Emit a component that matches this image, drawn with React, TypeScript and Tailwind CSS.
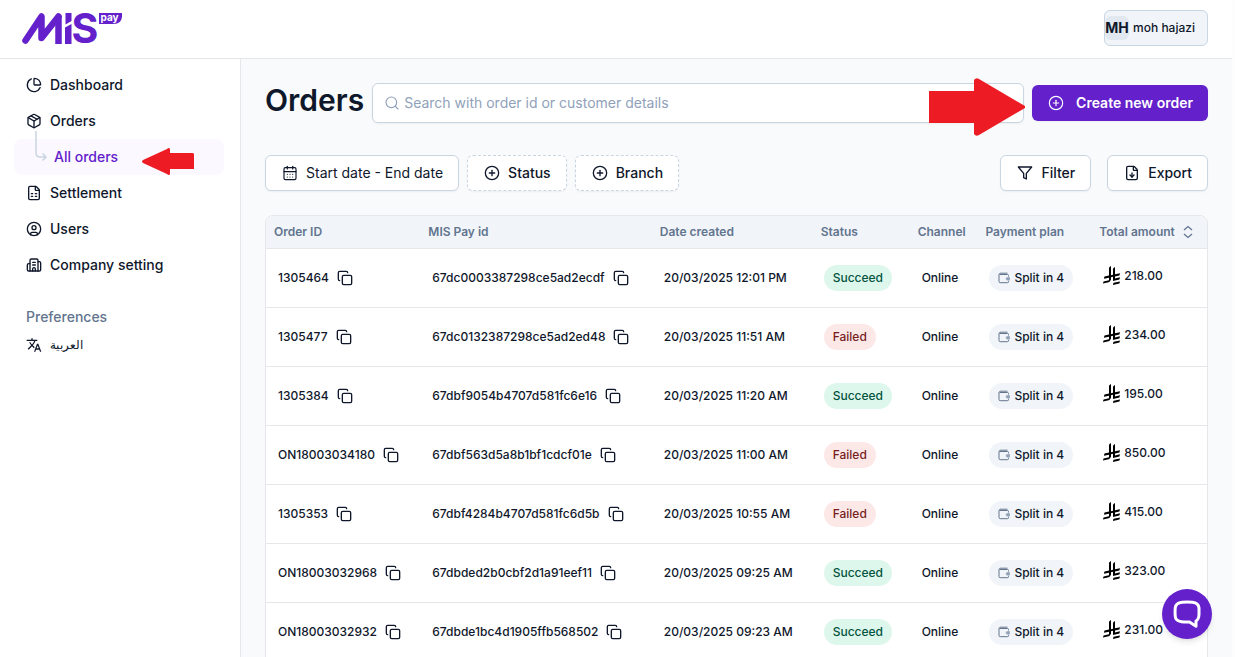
import type { ReactNode } from "react";
import {
  Building2,
  CalendarDays,
  ChartPie,
  CirclePlus,
  CircleUser,
  Copy,
  FileDown,
  FileSpreadsheet,
  Package,
  Search,
} from "lucide-react";
import { MdTranslate } from "react-icons/md";

type Order = {
  id: string;
  payId: string;
  date: string;
  status: "Succeed" | "Failed";
  amount: string;
};

const orders: Order[] = [
  { id: "1305464", payId: "67dc0003387298ce5ad2ecdf", date: "20/03/2025 12:01 PM", status: "Succeed", amount: "218.00" },
  { id: "1305477", payId: "67dc0132387298ce5ad2ed48", date: "20/03/2025 11:51 AM", status: "Failed", amount: "234.00" },
  { id: "1305384", payId: "67dbf9054b4707d581fc6e16", date: "20/03/2025 11:20 AM", status: "Succeed", amount: "195.00" },
  { id: "ON18003034180", payId: "67dbf563d5a8b1bf1cdcf01e", date: "20/03/2025 11:00 AM", status: "Failed", amount: "850.00" },
  { id: "1305353", payId: "67dbf4284b4707d581fc6d5b", date: "20/03/2025 10:55 AM", status: "Failed", amount: "415.00" },
  { id: "ON18003032968", payId: "67dbded2b0cbf2d1a91eef11", date: "20/03/2025 09:25 AM", status: "Succeed", amount: "323.00" },
  { id: "ON18003032932", payId: "67dbde1bc4d1905ffb568502", date: "20/03/2025 09:23 AM", status: "Succeed", amount: "231.00" },
];

function Logo() {
  return (
    <svg viewBox="0 0 101 33" className="h-[33px] w-[101px] overflow-visible" role="img" aria-label="MIS Pay">
      <g fill="none" stroke="#6320cb" strokeWidth="6.5" strokeLinejoin="round">
        <polyline points="3.5,28.5 19.5,4.5 19.5,26 36.500,4.5" strokeLinecap="round" />
        <line x1="36.5" y1="4" x2="36.5" y2="32" />
      </g>
      <polygon points="43,15.5 49.5,12 49.5,32 43,32" fill="#6320cb" />
      <polygon points="43.5,1 49.5,1 49.5,9 43.5,12.5" fill="#6320cb" />
      <text x="49.5" y="31" fontFamily="Inter, sans-serif" fontWeight="700" fontSize="41" fill="#6320cb">
        S
      </text>
      <path d="M77 1H100V5Q99 12 92 12H77Z" fill="#6320cb" />
      <text x="78.5" y="8.5" fontFamily="Inter, sans-serif" fontWeight="700" fontSize="10" fill="#fff">
        pay
      </text>
    </svg>
  );
}

function Riyal() {
  return (
    <svg viewBox="0 0 1125 1257" className="h-[19px] w-[17px] shrink-0" fill="#000" role="img" aria-label="SAR">
      <path d="M699.62 1113.02c-20.06 44.48-33.32 92.75-38.4 143.37l424.51-90.24c20.06-44.47 33.31-92.75 38.4-143.37l-424.51 90.24Z" />
      <path d="M1085.73 895.8c20.06-44.47 33.32-92.75 38.4-143.37l-330.68 70.33v-135.2l292.27-62.11c20.06-44.47 33.32-92.75 38.4-143.37l-330.68 70.27V66.13c-50.67 28.45-95.67 66.32-132.25 110.99v403.35l-132.25 28.11V0c-50.67 28.44-95.67 66.32-132.25 110.99v525.69l-295.91 62.88c-20.06 44.47-33.33 92.75-38.42 143.37l334.33-71.05v170.26l-358.3 76.14c-20.06 44.47-33.32 92.75-38.4 143.37l375.04-79.7c30.53-6.35 56.77-24.4 73.83-49.24l68.78-101.97c7.14-10.55 11.3-23.27 11.3-36.97v-149.98l132.25-28.11v270.4l424.53-90.28Z" />
    </svg>
  );
}

function WalletIcon() {
  return (
    <svg viewBox="0 0 12 12" className="size-3 shrink-0" fill="none" stroke="#64748b" strokeWidth="1" aria-hidden="true">
      <path d="M10.5 4.500V3.500a1 1 0 0 0-1-1H2A.7.7 0 0 1 2 1.200h7.500M1 2v7.500a1.200 1.200 0 0 0 1.200 1.200h7.300a1 1 0 0 0 1-1V8.800" />
      <path d="M11.500 5.500H9.500a1.300 1.300 0 0 0 0 2.600h2z" fill="#94a3b8" stroke="#94a3b8" strokeWidth="0.8" />
    </svg>
  );
}

function NavItem({ icon, label }: { icon: ReactNode; label: string }) {
  return (
    <a href="#" className="flex h-9 items-center gap-2 px-3">
      {icon}
      {label}
    </a>
  );
}

function Sidebar() {
  return (
    <nav className="w-[241px] shrink-0 border-r border-gray-200 bg-white pt-2 pr-4 pl-3.5 text-[14px] leading-5 font-medium text-slate-900">
      <NavItem icon={<ChartPie className="size-4" />} label="Dashboard" />
      <NavItem icon={<Package className="size-4" />} label="Orders" />
      <a href="#" className="relative flex h-9 items-center rounded-lg bg-[#fbf9ff] pl-10 text-[#6320cb]">
        <svg viewBox="0 0 14 32" className="absolute -top-2 left-5 h-8 w-3.5" fill="none" stroke="#cbd5e1" strokeWidth="1.5" aria-hidden="true">
          <path d="M2 0V22Q2 26 6 26H12M8.5 22.5L12 26L8.5 29.5" />
        </svg>
        All orders
      </a>
      <NavItem icon={<FileSpreadsheet className="size-4" />} label="Settlement" />
      <NavItem icon={<CircleUser className="size-4" />} label="Users" />
      <NavItem icon={<Building2 className="size-4" />} label="Company setting" />
      <p className="mt-6 px-3 text-slate-500">Preferences</p>
      <a href="#" lang="ar" className="mt-1 flex h-7 items-center gap-2 px-3 font-[Liberation_Serif,serif] text-[12px] font-normal">
        <MdTranslate className="size-4" />
        <span>العربية</span>
      </a>
    </nav>
  );
}

const solidButton = "flex h-9 items-center rounded-md border border-slate-300 bg-white pr-[15px] pl-4 shadow-xs";
const dashedButton = "flex h-9 items-center gap-2 rounded-md border border-dashed border-slate-300 bg-white pr-[15px] pl-4 font-medium shadow-xs";

function CopyValue({ value }: { value: string }) {
  return (
    <div className="flex items-center gap-2">
      {value}
      <button type="button" aria-label={`Copy ${value}`}>
        <Copy className="size-4" />
      </button>
    </div>
  );
}

function OrdersTable() {
  return (
    <div className="mt-6 rounded-t-lg border border-gray-200 bg-white">
      <table className="w-full table-fixed text-left text-[12px] leading-4 font-medium whitespace-nowrap">
        <colgroup>
          <col className="w-[16.4%]" />
          <col className="w-[24.6%]" />
          <col className="w-[17.1%]" />
          <col className="w-[10.3%]" />
          <col className="w-[7.2%]" />
          <col className="w-[12.1%]" />
          <col className="w-[12.3%]" />
        </colgroup>
        <thead className="bg-slate-100 text-slate-500">
          <tr className="h-8 border-b border-gray-200">
            <th className="rounded-tl-lg px-2 font-semibold">Order ID</th>
            <th className="px-2 font-semibold">MIS Pay id</th>
            <th className="px-2 font-semibold">Date created</th>
            <th className="px-2 font-semibold">Status</th>
            <th className="px-2 font-semibold">Channel</th>
            <th className="px-2 font-semibold">Payment plan</th>
            <th className="rounded-tr-lg px-2 font-semibold">
              <button type="button" className="flex items-center gap-2">
                Total amount
                <svg viewBox="0 0 10 14" className="h-3.5 w-2.5 shrink-0" fill="none" stroke="currentColor" strokeWidth="1.3" aria-hidden="true">
                  <path d="M1 5L5 1.500L9 5M1 9L5 12.500L9 9" />
                </svg>
              </button>
            </th>
          </tr>
        </thead>
        <tbody>
          {orders.map((order) => (
            <tr key={order.payId} className="h-[59px] border-b border-gray-200">
              <td className="px-3">
                <CopyValue value={order.id} />
              </td>
              <td className="px-3">
                <CopyValue value={order.payId} />
              </td>
              <td className="px-3">{order.date}</td>
              <td className="px-[11px]">
                <span
                  className={
                    order.status === "Succeed"
                      ? "inline-flex h-[26px] items-center rounded-full bg-[#def7ec] px-[9px] text-[#03543f]"
                      : "inline-flex h-[26px] items-center rounded-full bg-[#fde8e8] px-[9px] text-[#771d1d]"
                  }
                >
                  {order.status}
                </span>
              </td>
              <td className="px-3">Online</td>
              <td className="px-3">
                <span className="inline-flex h-[26px] items-center gap-1 rounded-full bg-slate-100 px-[9px]">
                  <WalletIcon />
                  Split in 4
                </span>
              </td>
              <td className="px-3 pb-1">
                <div className="flex items-center gap-1">
                  <Riyal />
                  {order.amount}
                </div>
              </td>
            </tr>
          ))}
        </tbody>
      </table>
    </div>
  );
}

export default function App() {
  return (
    <div className="relative flex h-screen flex-col overflow-hidden bg-[#fdfdfe] pr-[3px] font-[Inter,sans-serif] text-[14px] leading-5 text-slate-900">
      <header className="flex h-[59px] shrink-0 items-center justify-between border-b border-gray-200 bg-white pr-6 pb-0.5 pl-[22px]">
        <a href="#">
          <Logo />
        </a>
        <button type="button" className="flex h-9 items-center gap-1 rounded-md border border-slate-300 bg-slate-100 pr-3 text-[12px] font-medium">
          <span className="flex size-6 items-center justify-center rounded-md bg-slate-200 text-[14px] font-bold">MH</span>
          moh hajazi
        </button>
      </header>
      <div className="flex min-h-0 flex-1">
        <Sidebar />
        <main className="min-w-0 flex-1 overflow-hidden bg-slate-50 px-6 pt-6">
          <div className="relative flex items-center gap-2">
            <h1 className="pb-1.5 text-[30px] leading-8 font-semibold">Orders</h1>
            <label className="flex h-10 min-w-0 flex-1 items-center gap-1 rounded-md border border-slate-300 bg-white px-[11px] shadow-xs">
              <Search className="size-4 text-slate-400" strokeWidth={1.75} />
              <input
                type="search"
                aria-label="Search orders"
                placeholder="Search with order id or customer details"
                className="min-w-0 flex-1 bg-transparent outline-none placeholder:text-slate-400"
              />
            </label>
            <svg viewBox="0 0 96 58" className="absolute -top-[5px] right-[183px] h-[58px] w-24" fill="#ed1c24" aria-hidden="true">
              <path d="M0 13H45V2Q47-1 50 1L96 28Q97 29 96 30L50 57Q47 59 45 56V45H0Z" />
            </svg>
            <button type="button" className="flex h-9 items-center gap-3 rounded-md bg-[#6320cb] pr-[15px] pl-4 font-semibold text-white shadow-xs">
              <CirclePlus className="size-4" strokeWidth={1.75} />
              Create new order
            </button>
          </div>
          <div className="mt-8 flex items-center gap-2">
            <button type="button" className={`${solidButton} gap-2`}>
              <CalendarDays className="size-4" strokeWidth={1.75} />
              Start date - End date
            </button>
            <button type="button" className={dashedButton}>
              <CirclePlus className="size-4" />
              Status
            </button>
            <button type="button" className={dashedButton}>
              <CirclePlus className="size-4" />
              Branch
            </button>
            <div className="ml-auto flex gap-4">
              <button type="button" className={`${solidButton} gap-2 font-medium`}>
                <svg viewBox="0 0 24 24" className="size-4" fill="none" stroke="currentColor" strokeWidth="2" strokeLinejoin="round" aria-hidden="true">
                  <polygon points="22 3 2 3 10 12.46 10 19 14 21 14 12.46" />
                </svg>
                Filter
              </button>
              <button type="button" className={`${solidButton} gap-2 font-medium`}>
                <FileDown className="size-4" />
                Export
              </button>
            </div>
          </div>
          <OrdersTable />
        </main>
      </div>
      <svg viewBox="0 0 52 27" className="absolute top-[148px] left-[142px] h-[27px] w-[52px]" fill="#ed1c24" aria-hidden="true">
        <path d="M51 5H28V1Q27-1 25 1L1 12Q-1 13.500 1 15L25 26Q27 28 28 26V21H52V6Z" />
      </svg>
      <button type="button" aria-label="Open chat" className="fixed right-[23px] bottom-[18px] flex size-[50px] items-center justify-center rounded-full bg-[#6320cb] shadow-md">
        <svg viewBox="0 0 28 28" className="size-7" fill="none" stroke="#fff" strokeWidth="3" strokeLinejoin="round" aria-hidden="true">
          <path d="M9 2.300Q14 1.700 19.500 2.300Q25.500 3 26 8V14.500Q25.800 19.500 23 21V26.200L16.500 22Q12 22.300 8.500 21.700Q2.500 21 2.200 16Q1.900 12 2.200 8Q2.700 3 9 2.300Z" />
        </svg>
      </button>
    </div>
  );
}
